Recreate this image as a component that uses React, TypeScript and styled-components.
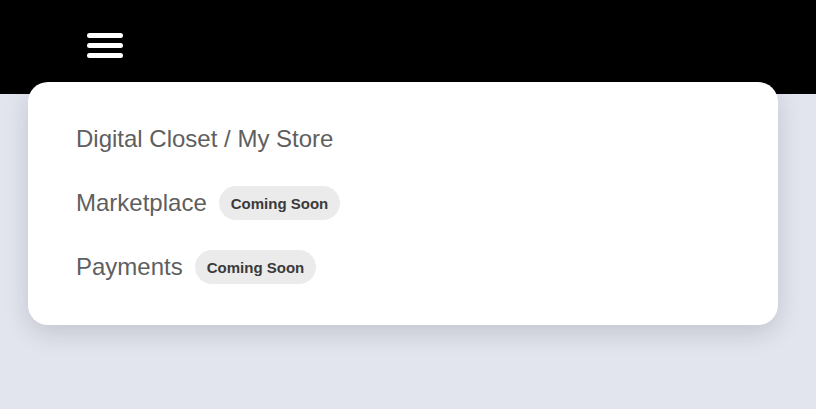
import React from "react";
import styled, { createGlobalStyle } from "styled-components";

const Global = createGlobalStyle`
  html, body { margin: 0; padding: 0; }
  body {
    background: #e2e5ee;
    font-family: "Liberation Sans", Arial, sans-serif;
    width: 816px;
    height: 409px;
    overflow: hidden;
  }
`;

const Page = styled.div`
  position: relative;
  width: 816px;
  height: 409px;
  background: #e2e5ee;
`;

const Header = styled.header`
  height: 94px;
  background: #000;
  display: flex;
  align-items: flex-start;
  padding: 33px 0 0 87px;
  box-sizing: border-box;
`;

const MenuButton = styled.button`
  display: flex;
  flex-direction: column;
  gap: 5px;
  padding: 0;
  border: 0;
  background: transparent;
  cursor: pointer;
`;

const Bar = styled.span`
  display: block;
  width: 36px;
  height: 5px;
  border-radius: 3px;
  background: #fff;
`;

const Menu = styled.nav`
  position: absolute;
  left: 28px;
  top: 82px;
  width: 750px;
  height: 243px;
  box-sizing: border-box;
  background: #fff;
  border-radius: 20px;
  box-shadow: 0 8px 26px rgba(0, 0, 0, 0.14);
  padding: 25px 48px;
  display: flex;
  flex-direction: column;
`;

const Item = styled.div`
  height: 64px;
  display: flex;
  align-items: center;
  gap: 12px;
`;

const Label = styled.span`
  font-size: 24px;
  color: #5f5f5f;
`;

const Badge = styled.span`
  height: 34px;
  padding: 0 12px;
  display: inline-flex;
  align-items: center;
  border-radius: 17px;
  background: #ebebeb;
  color: #3a3a3a;
  font-size: 15px;
  font-weight: 700;
`;

const items: { label: string; soon?: boolean }[] = [
  { label: "Digital Closet / My Store" },
  { label: "Marketplace", soon: true },
  { label: "Payments", soon: true },
];

export default function App() {
  return (
    <Page>
      <Global />
      <Header>
        <MenuButton aria-label="Menu">
          <Bar />
          <Bar />
          <Bar />
        </MenuButton>
      </Header>
      <Menu>
        {items.map((it) => (
          <Item key={it.label}>
            <Label>{it.label}</Label>
            {it.soon && <Badge>Coming Soon</Badge>}
          </Item>
        ))}
      </Menu>
    </Page>
  );
}
